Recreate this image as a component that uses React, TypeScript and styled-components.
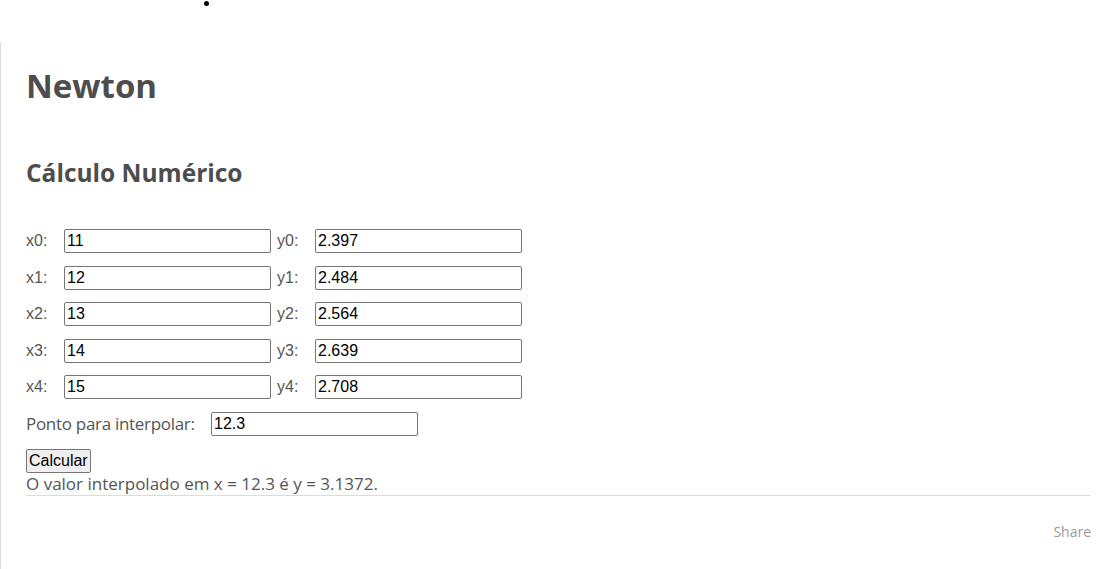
import React from "react";
import styled, { createGlobalStyle } from "styled-components";

const Global = createGlobalStyle`
  html, body { margin: 0; padding: 0; background: #fff; }
  body { font-family: "Open Sans", "Noto Sans", sans-serif; color: #555; }
`;

const TopBar = styled.div`
  height: 42px;
  display: flex;
  align-items: flex-start;
`;

const Bullet = styled.span`
  width: 5px;
  height: 5px;
  border-radius: 50%;
  background: #000;
  margin: 1px 0 0 204px;
`;

const Card = styled.main`
  border-left: 1px solid #dcdcdc;
  padding: 0 25px 30px 25px;
  min-height: 527px;
  box-sizing: border-box;
`;

const Title = styled.h1`
  font-size: 33px;
  font-weight: 700;
  color: #4d4d4d;
  margin: 0;
  padding-top: 21px;
  line-height: 46px;
`;

const Subtitle = styled.h2`
  font-size: 24.5px;
  font-weight: 700;
  color: #4d4d4d;
  margin: 0;
  padding-top: 47px;
  line-height: 34px;
`;

const Form = styled.form`
  display: flex;
  flex-direction: column;
  gap: 12.5px;
  margin-top: 39px;
`;

const Row = styled.div`
  display: flex;
  align-items: center;
  height: 24px;
`;

const VarLabel = styled.label<{ $gap?: number }>`
  font-family: "Liberation Sans", Arial, sans-serif;
  font-size: 16px;
  color: #555;
  width: 38px;
  margin-left: ${(p) => p.$gap ?? 0}px;
  flex: none;
`;

const TextLabel = styled.label`
  font-size: 17px;
  letter-spacing: -0.3px;
  color: #555;
  width: 185px;
  flex: none;
`;

const Field = styled.input`
  box-sizing: border-box;
  width: 207px;
  height: 24px;
  font-family: "Liberation Sans", Arial, sans-serif;
  font-size: 16px;
  color: #000;
  padding: 1px 2px;
  border: 1px solid #767676;
  border-radius: 2px;
  background: #fff;
  outline: none;
`;

const Button = styled.button`
  display: block;
  box-sizing: border-box;
  height: 24px;
  padding: 1px 2px;
  font-family: "Liberation Sans", Arial, sans-serif;
  font-size: 16px;
  color: #000;
  background: #efefef;
  border: 1px solid #767676;
  border-radius: 2px;
  margin-top: 0.5px;
`;

const Result = styled.p`
  margin: 0;
  font-size: 17px;
  line-height: 22px;
  color: #555;
`;

const Divider = styled.hr`
  border: none;
  border-top: 1px solid #dcdcdc;
  margin: 0;
`;

const Footer = styled.div`
  display: flex;
  justify-content: flex-end;
  padding-top: 26px;
`;

const Share = styled.a`
  font-size: 14px;
  color: #999;
  text-decoration: none;
`;

const points = [
  ["11", "2.397"],
  ["12", "2.484"],
  ["13", "2.564"],
  ["14", "2.639"],
  ["15", "2.708"],
];

export default function App() {
  return (
    <>
      <Global />
      <TopBar>
        <Bullet />
      </TopBar>
      <Card>
        <Title>Newton</Title>
        <Subtitle>Cálculo Numérico</Subtitle>
        <Form onSubmit={(e) => e.preventDefault()}>
          {points.map(([x, y], i) => (
            <Row key={i}>
              <VarLabel>x{i}:</VarLabel>
              <Field defaultValue={x} />
              <VarLabel $gap={6}>y{i}:</VarLabel>
              <Field defaultValue={y} />
            </Row>
          ))}
          <Row>
            <TextLabel>Ponto para interpolar:</TextLabel>
            <Field defaultValue="12.3" />
          </Row>
          <div>
            <Button type="submit">Calcular</Button>
            <Result>O valor interpolado em x = 12.3 é y = 3.1372.</Result>
          </div>
        </Form>
        <Divider />
        <Footer>
          <Share href="#">Share</Share>
        </Footer>
      </Card>
    </>
  );
}
